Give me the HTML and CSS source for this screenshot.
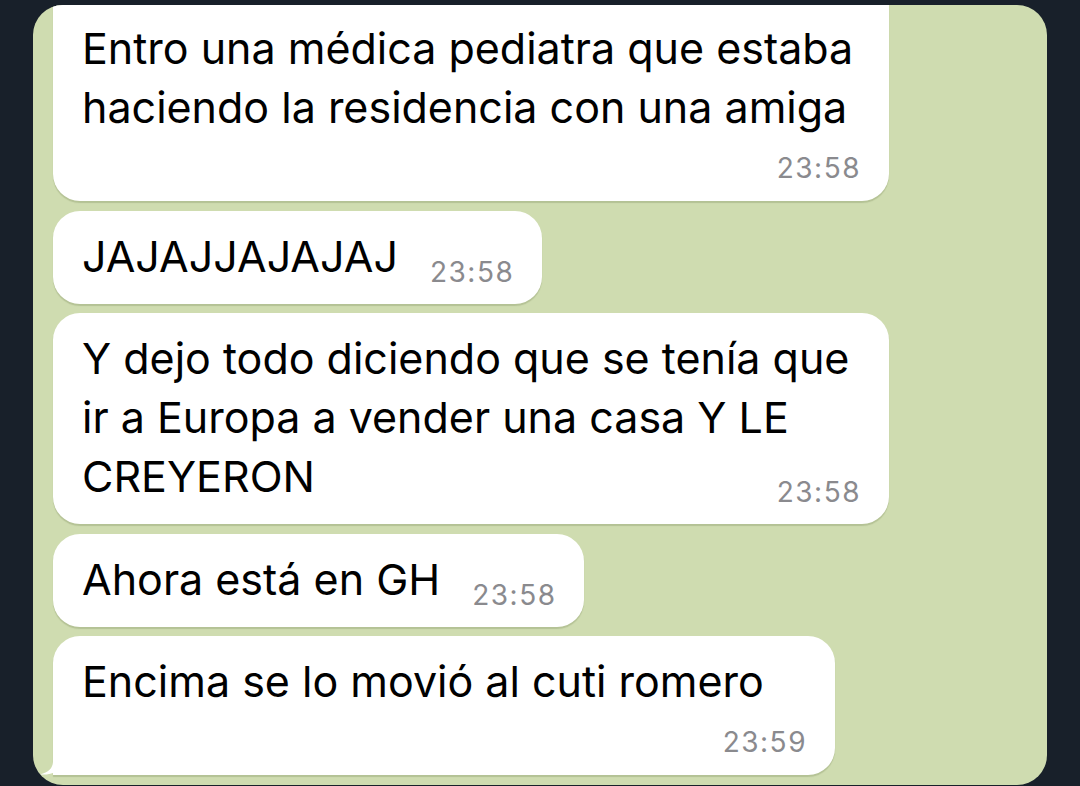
FILE: index.html
```html
<!DOCTYPE html>
<html lang="es">
<head>
    <meta charset="UTF-8">
    <meta name="viewport" content="width=device-width, initial-scale=1.0">
    <title>Chat</title>
    <link rel="stylesheet" href="styles.css">
</head>
<body>
    <div class="chat">
        <div class="bubble full clipped">
            <div class="text">Entro una médica pediatra que estaba<br>haciendo la residencia con una amiga</div>
            <div class="time stacked">23:58</div>
        </div>

        <div class="bubble">
            <div class="row">
                <div class="text">JAJAJJAJAJAJ</div>
                <div class="time">23:58</div>
            </div>
        </div>

        <div class="bubble full">
            <div class="row">
                <div class="text">Y dejo todo diciendo que se tenía que<br>ir a Europa a vender una casa Y LE<br>CREYERON</div>
                <div class="time">23:58</div>
            </div>
        </div>

        <div class="bubble">
            <div class="row">
                <div class="text">Ahora está en GH</div>
                <div class="time">23:58</div>
            </div>
        </div>

        <div class="bubble last">
            <div class="text">Encima se lo movió al cuti romero</div>
            <div class="time stacked">23:59</div>
            <svg class="tail" width="20" height="26" viewBox="0 0 20 26">
                <path d="M14 0 V12 C14 19 10 23 1 25.5 C7 26 13 25 18 22 L20 26 H20 V0 Z" fill="#fff"/>
            </svg>
        </div>
    </div>
</body>
</html>
```

FILE: styles.css
```css
body {
    margin: 0;
    background-color: #18202a;
    font-family: Inter, "Noto Sans", sans-serif;
    color: #000;
}
.chat {
    margin: 5px 33px 0 33px;
    height: 780px;
    background-color: #cfdcb0;
    border-radius: 30px;
    overflow: hidden;
    display: flex;
    flex-direction: column;
    justify-content: flex-end;
    align-items: flex-start;
    gap: 9.5px;
    padding: 0 0 10px 20px;
    box-sizing: border-box;
}
.bubble {
    position: relative;
    flex-shrink: 0;
    background-color: #fff;
    border-radius: 27px;
    padding: 16px 28px 18px 29px;
    box-shadow: 0 2px 1px rgba(60, 80, 30, 0.18);
    box-sizing: border-box;
}
.bubble.clipped {
    padding-top: 40px;
}
.bubble.full {
    width: 836px;
}
.bubble.last {
    width: 782px;
    border-bottom-left-radius: 0;
}
.text {
    font-size: 43px;
    line-height: 59px;
    white-space: nowrap;
}
.row {
    display: flex;
    align-items: flex-end;
    justify-content: space-between;
    gap: 32px;
}
.row .text {
    min-width: 0;
}
.time {
    flex-shrink: 0;
    font-size: 28px;
    line-height: 30px;
    color: #8a8a8e;
    letter-spacing: 1.5px;
}
.row .time {
    margin-bottom: -1px;
}
.time.stacked {
    text-align: right;
    margin-top: 16px;
}
.tail {
    position: absolute;
    left: -14px;
    bottom: 0;
}
```
